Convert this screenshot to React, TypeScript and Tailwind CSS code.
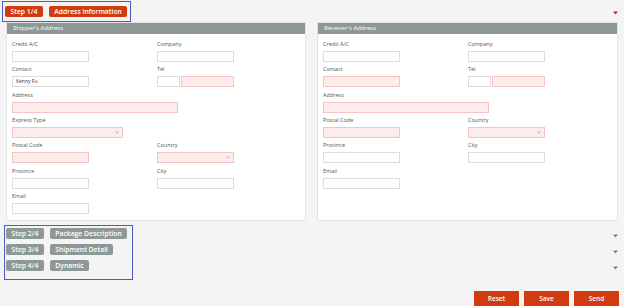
import React from "react";
import clsx from "clsx";

function Caret({ className }: { className?: string }) {
  return (
    <svg width="5" height="4" viewBox="0 0 5 4" className={className}>
      <path d="M0 0.5 L5 0.5 L2.5 3.5 Z" fill="currentColor" />
    </svg>
  );
}

function Input({ w, req, value }: { w: string; req?: boolean; value?: string }) {
  return (
    <div
      className={clsx(
        "h-[11px] border px-[3px] text-[5px] leading-[9px] text-[#333]",
        w,
        req ? "bg-[#fdecec] border-[#f4c4c4]" : "bg-white border-[#dcdcdc]"
      )}
    >
      {value}
    </div>
  );
}

function Select({ w }: { w: string }) {
  return (
    <div className={clsx("h-[11px] border bg-[#fdecec] border-[#f4c4c4] flex items-center justify-end pr-[3px]", w)}>
      <svg width="4" height="3" viewBox="0 0 4 3">
        <path d="M0.5 0.5 L2 2.2 L3.5 0.5" stroke="#999" strokeWidth="0.7" fill="none" />
      </svg>
    </div>
  );
}

function Field({ label, children, className }: { label: string; children: React.ReactNode; className?: string }) {
  return (
    <div className={clsx("flex flex-col", className)}>
      <div className="h-[8px] leading-[8px] text-[5.5px] text-[#555] mb-[3px]">{label}</div>
      {children}
    </div>
  );
}

function Tel() {
  return (
    <div className="flex gap-[1px]">
      <Input w="w-[23px]" />
      <Input w="w-[53px]" req />
    </div>
  );
}

function Panel({ title, width, children }: { title: string; width: string; children: React.ReactNode }) {
  return (
    <div className={clsx("flex flex-col bg-white border border-[#e3e3e3]", width)}>
      <div className="h-[11px] bg-[#8e9895] text-white text-[6px] leading-[11px] px-[6px]">{title}</div>
      <div className="grid grid-cols-[145px_1fr] gap-y-[3.33px] content-start px-[5px] pt-[6px] pb-[6px]">{children}</div>
    </div>
  );
}

function StepButton({ children, active }: { children: React.ReactNode; active?: boolean }) {
  return (
    <div
      className={clsx(
        "h-[11px] px-[5.5px] rounded-[2px] text-white text-[6.8px] font-semibold leading-[11px] whitespace-nowrap",
        active ? "bg-[#d03b0f]" : "bg-[#8e9895]"
      )}
    >
      {children}
    </div>
  );
}

export default function App() {
  return (
    <div className="w-[624px] h-[306px] bg-[#f4f4f4] overflow-hidden" style={{ fontFamily: '"Open Sans", "Noto Sans", sans-serif' }}>
      {/* Step 1 header */}
      <div className="flex justify-between items-start pt-[1px] pl-[2px] pr-[6px]">
        <div className="flex gap-[6px] w-[129px] h-[21px] border border-[#4a5bc4] pl-[2px] pt-[4px]">
          <StepButton active>Step 1/4</StepButton>
          <StepButton active>Address Information</StepButton>
        </div>
        <Caret className="mt-[10px] text-[#9a3a24]" />
      </div>

      {/* Address panels */}
      <div className="flex gap-[11px] px-[6px]">
        <Panel title="Shipper's Address" width="w-[300px]">
          <Field label="Credit A/C"><Input w="w-[77px]" /></Field>
          <Field label="Company"><Input w="w-[77px]" /></Field>
          <Field label="Contact"><Input w="w-[77px]" value="Kenny Fu" /></Field>
          <Field label="Tel"><Tel /></Field>
          <Field label="Address" className="col-span-2"><Input w="w-[166px]" req /></Field>
          <Field label="Express Type" className="col-span-2"><Select w="w-[111px]" /></Field>
          <Field label="Postal Code"><Input w="w-[77px]" req /></Field>
          <Field label="Country"><Select w="w-[77px]" /></Field>
          <Field label="Province"><Input w="w-[77px]" /></Field>
          <Field label="City"><Input w="w-[77px]" /></Field>
          <Field label="Email" className="col-span-2"><Input w="w-[77px]" /></Field>
        </Panel>
        <Panel title="Receiver's Address" width="w-[301px]">
          <Field label="Credit A/C"><Input w="w-[77px]" /></Field>
          <Field label="Company"><Input w="w-[77px]" /></Field>
          <Field label="Contact"><Input w="w-[77px]" req /></Field>
          <Field label="Tel"><Tel /></Field>
          <Field label="Address" className="col-span-2"><Input w="w-[166px]" req /></Field>
          <Field label="Postal Code"><Input w="w-[77px]" req /></Field>
          <Field label="Country"><Select w="w-[77px]" /></Field>
          <Field label="Province"><Input w="w-[77px]" /></Field>
          <Field label="City"><Input w="w-[77px]" /></Field>
          <Field label="Email" className="col-span-2"><Input w="w-[77px]" /></Field>
        </Panel>
      </div>

      {/* Remaining steps */}
      <div className="flex justify-between mt-[4px] pl-[4px] pr-[6px]">
        <div className="flex flex-col gap-[5px] w-[129px] border border-[#4a5bc4] pl-[1px] pt-[2px] pb-[8px]">
          <div className="flex gap-[6px]">
            <StepButton>Step 2/4</StepButton>
            <StepButton>Package Description</StepButton>
          </div>
          <div className="flex gap-[6px]">
            <StepButton>Step 3/4</StepButton>
            <StepButton>Shipment Detail</StepButton>
          </div>
          <div className="flex gap-[6px]">
            <StepButton>Step 4/4</StepButton>
            <StepButton>Dynamic</StepButton>
          </div>
        </div>
        <div className="flex flex-col pt-[3px] text-[#7a7a7a]">
          <div className="h-[16px] flex items-center"><Caret /></div>
          <div className="h-[16px] flex items-center"><Caret /></div>
          <div className="h-[16px] flex items-center"><Caret /></div>
        </div>
      </div>

      {/* Actions */}
      <div className="flex justify-end gap-[5px] pr-[5px] mt-[11px]">
        {["Reset", "Save", "Send"].map((t) => (
          <div key={t} className="w-[45px] h-[15px] bg-[#d03b0f] text-white text-[6.5px] font-semibold leading-[15px] text-center">
            {t}
          </div>
        ))}
      </div>
    </div>
  );
}
